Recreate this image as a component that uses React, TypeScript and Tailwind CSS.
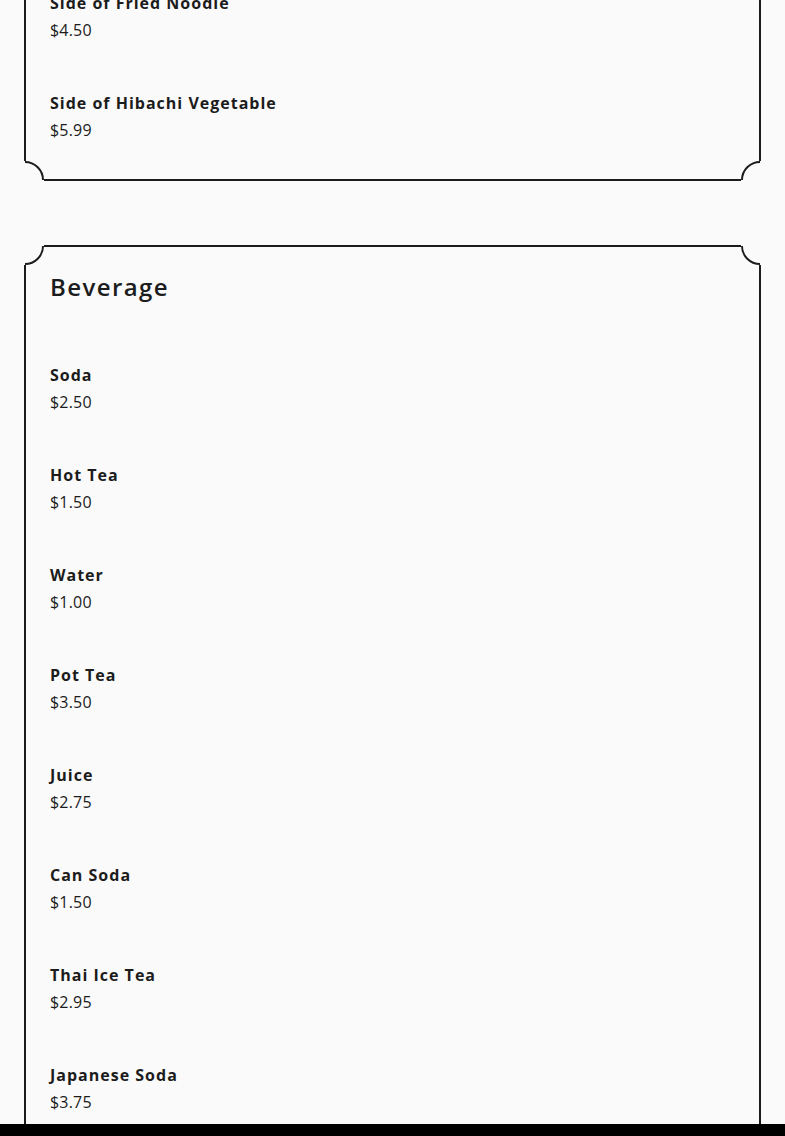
import React from 'react';

interface MenuItem {
  name: string;
  price: string;
}

interface SectionProps {
  title?: string;
  items: MenuItem[];
  cutTop?: boolean;
}

const Corner: React.FC<{ className: string; rotate: string }> = ({ className, rotate }) => (
  <svg
    className={`absolute w-5 h-5 ${className} ${rotate}`}
    viewBox="0 0 20 20"
    aria-hidden="true"
  >
    <rect x="0" y="0" width="20" height="20" fill="#fafafa" />
    <path d="M1 19 A18 18 0 0 0 19 1" fill="none" stroke="#1c1c1c" strokeWidth="2" />
  </svg>
);

const beverages: MenuItem[] = [
  { name: 'Soda', price: '$2.50' },
  { name: 'Hot Tea', price: '$1.50' },
  { name: 'Water', price: '$1.00' },
  { name: 'Pot Tea', price: '$3.50' },
  { name: 'Juice', price: '$2.75' },
  { name: 'Can Soda', price: '$1.50' },
  { name: 'Thai Ice Tea', price: '$2.95' },
  { name: 'Japanese Soda', price: '$3.75' },
];

const sides: MenuItem[] = [
  { name: 'Side of Fried Noodle', price: '$4.50' },
  { name: 'Side of Hibachi Vegetable', price: '$5.99' },
];

const Section: React.FC<SectionProps> = ({ title, items, cutTop }) => (
  <section
    className={`
      relative mx-6 border-2 border-[#1c1c1c] px-6 pb-6
      ${cutTop ? 'border-t-0 pt-0' : 'pt-6'}
    `}
  >
    {!cutTop && <Corner className="-top-0.5 -left-0.5" rotate="" />}
    {!cutTop && <Corner className="-top-0.5 -right-0.5" rotate="rotate-90" />}
    <Corner className="-bottom-0.5 -left-0.5" rotate="-rotate-90" />
    <Corner className="-bottom-0.5 -right-0.5" rotate="rotate-180" />

    {title && (
      <h2 className="text-2xl leading-8 font-semibold text-[#1c1c1c] tracking-[1.4px] mb-12">
        {title}
      </h2>
    )}
    <div className="flex flex-col gap-6">
      {items.map((item) => (
        <div key={item.name} className="py-3">
          <div className="text-base leading-[26px] font-bold text-[#1c1c1c] tracking-[1px] -mt-px mb-px">
            {item.name}
          </div>
          <div className="text-base leading-[26px] text-[#1c1c1c] tracking-[0.2px]">
            {item.price}
          </div>
        </div>
      ))}
    </div>
  </section>
);

export default function App() {
  return (
    <div
      className="h-[1136px] flex flex-col bg-[#fafafa] overflow-hidden"
      style={{ fontFamily: '"Open Sans", "Liberation Sans", sans-serif' }}
    >
      <main className="flex-1 overflow-hidden">
        <div className="-mt-[21px] flex flex-col gap-16">
          <Section items={sides} cutTop />
          <Section title="Beverage" items={beverages} />
        </div>
      </main>
      <footer className="h-3 bg-black shrink-0" />
    </div>
  );
}
